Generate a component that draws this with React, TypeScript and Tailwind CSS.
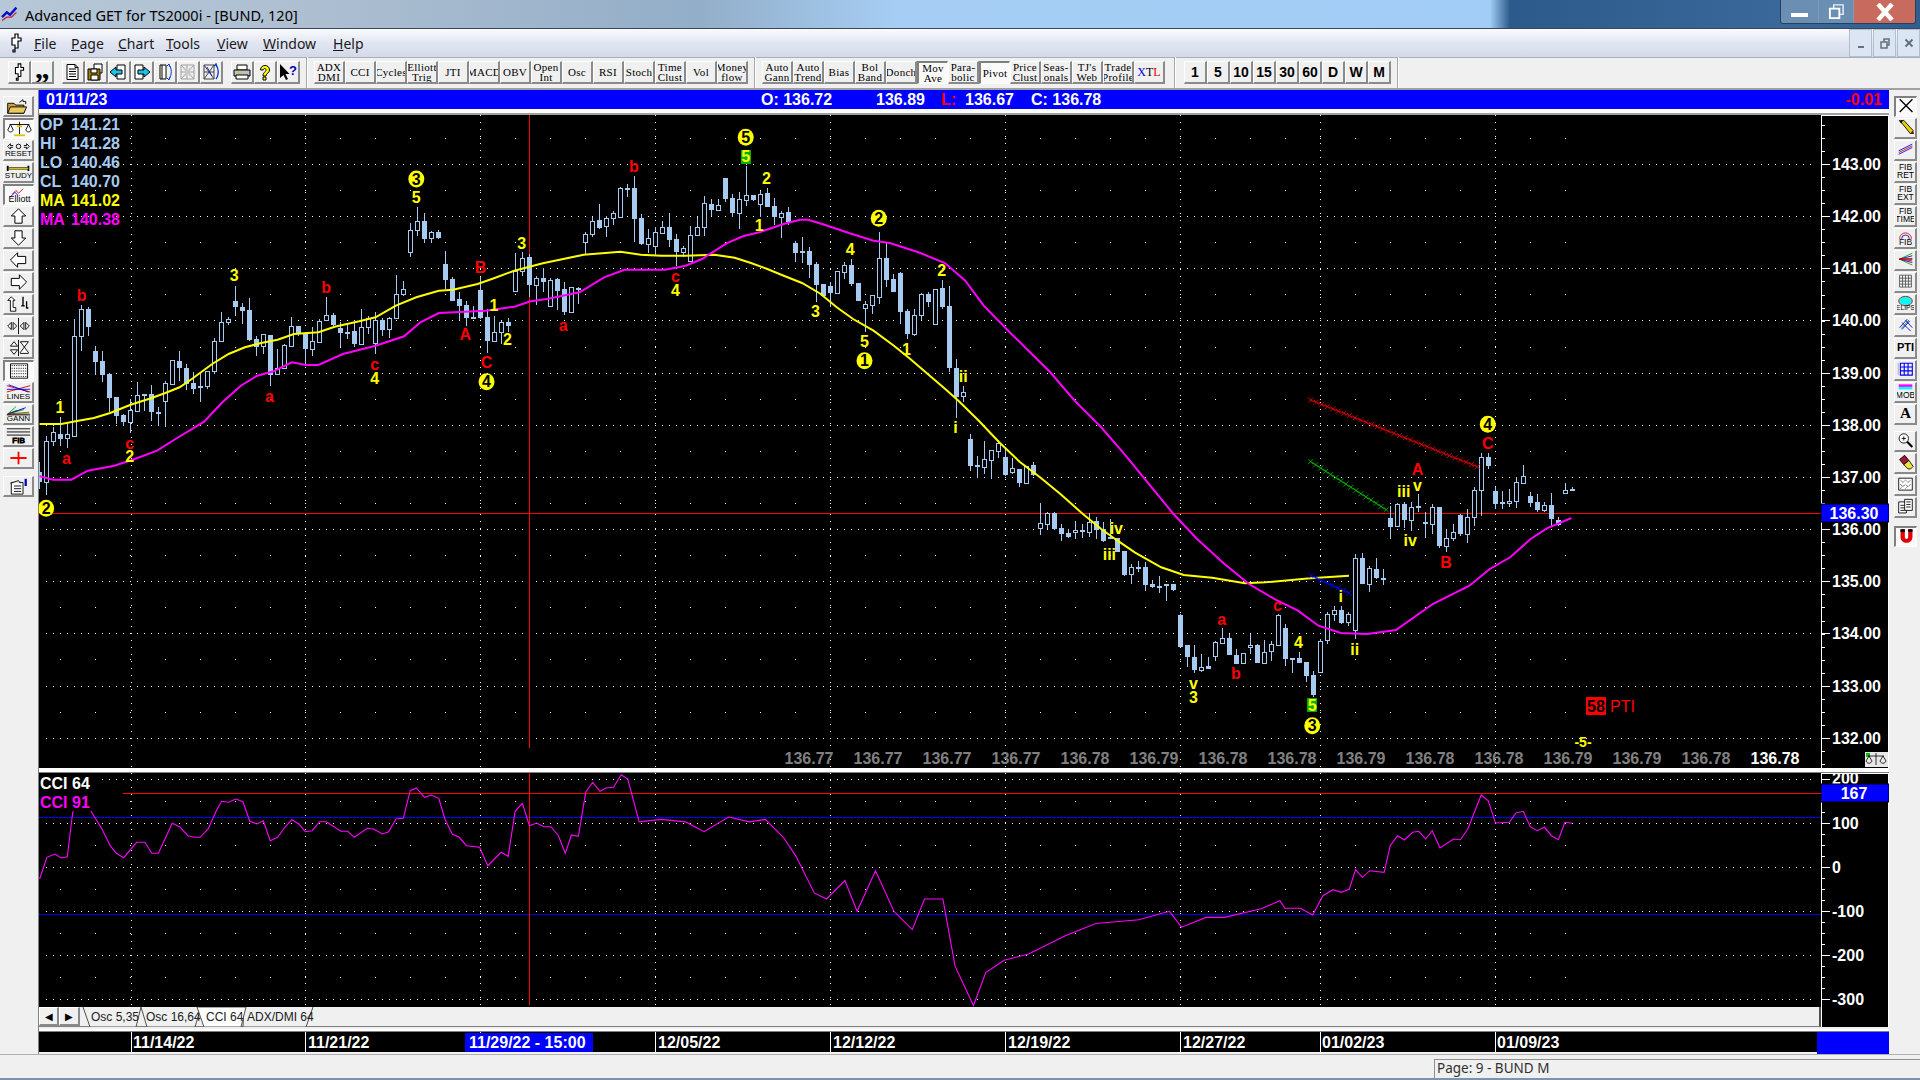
import type { ReactNode } from "react";
import clsx from "clsx";

type Pt = [number, number];
// [zoomX, hi, lo, top, bottom, solid]
type Bar = [number, number, number, number, number, number];

const CANDLE = "#a6caf0";

// chart data was read off crops, so each run keeps its own origin
const frame = (x0: number, y0: number, sx = 2.45, sy = 3) => ({ x0, y0, sx, sy });
const toPts = (f: ReturnType<typeof frame>, pts: number[][]): Pt[] =>
  pts.map(([x, y]) => [f.x0 + x / f.sx, f.y0 + y / f.sy]);

const F1 = frame(0, 0);
const F4 = frame(0, 240);
const F5 = frame(1280, 240);
const F6 = frame(640, 240);
const F7 = frame(0, 760);
const F8 = frame(1280, 700);
const F11 = frame(1000, 490);
const F12 = frame(400, 120);
const FULL = frame(0, 0, 1 / 1.2245, 1 / 1.2245);

const barRuns: { f: ReturnType<typeof frame>; bars: Bar[] }[] = [
  {
    f: F4,
    bars: [
      [97, 670, 750, 700, 728, 1], [114, 590, 768, 607, 728, 0], [131, 563, 622, 580, 607, 0], [148, 535, 620, 586, 600, 1],
      [165, 553, 627, 586, 598, 0], [183, 240, 590, 290, 590, 0], [200, 198, 335, 211, 290, 0], [217, 205, 290, 210, 263, 1],
      [234, 320, 408, 336, 368, 1], [251, 336, 430, 366, 407, 1], [268, 403, 520, 405, 476, 1], [286, 475, 555, 475, 530, 1],
      [303, 525, 560, 528, 548, 1], [320, 480, 583, 514, 548, 0], [337, 430, 520, 468, 515, 0], [354, 465, 515, 465, 470, 1],
      [371, 437, 545, 466, 520, 1], [388, 505, 560, 518, 520, 1], [405, 425, 563, 432, 485, 0], [422, 362, 435, 364, 434, 0],
      [439, 335, 425, 367, 388, 1], [456, 375, 452, 388, 435, 1], [473, 400, 465, 433, 449, 1], [490, 400, 490, 441, 446, 1],
      [507, 395, 450, 397, 442, 0], [525, 297, 405, 307, 395, 0], [542, 218, 310, 250, 307, 0], [559, 235, 257, 241, 250, 0],
      [576, 140, 230, 186, 203, 1], [593, 192, 255, 204, 215, 1], [611, 178, 305, 213, 302, 1], [628, 290, 352, 300, 323, 1],
      [645, 285, 345, 286, 320, 0], [662, 287, 440, 289, 407, 1], [679, 330, 407, 388, 406, 0], [697, 315, 390, 318, 388, 0],
      [714, 235, 320, 262, 320, 0], [731, 260, 290, 262, 285, 1], [748, 280, 378, 282, 330, 1], [765, 265, 350, 307, 330, 0],
      [782, 240, 310, 245, 308, 0], [800, 175, 240, 229, 242, 0], [817, 222, 260, 228, 258, 1], [834, 250, 325, 266, 282, 1],
      [851, 255, 300, 278, 282, 1], [868, 252, 325, 276, 316, 1], [886, 210, 315, 265, 314, 0], [903, 230, 285, 236, 265, 0],
      [920, 220, 345, 244, 313, 0], [937, 238, 290, 243, 272, 1], [954, 235, 298, 238, 271, 0], [971, 108, 240, 166, 238, 0],
      [988, 127, 170, 151, 166, 0],
    ],
  },
  {
    f: F12,
    bars: [
      [25, 312, 413, 332, 398, 0], [42, 265, 350, 307, 332, 0], [59, 282, 372, 307, 360, 1], [77, 335, 372, 340, 358, 0],
      [94, 332, 360, 340, 357, 1], [111, 397, 510, 435, 483, 1], [128, 475, 547, 481, 545, 1], [145, 520, 603, 541, 560, 1],
      [162, 545, 620, 558, 598, 1], [180, 560, 598, 595, 597, 1], [197, 475, 600, 513, 598, 1], [214, 570, 702, 595, 665, 1],
      [231, 590, 670, 640, 665, 0], [248, 605, 675, 610, 640, 0], [265, 598, 640, 610, 620, 1], [282, 403, 520, 455, 517, 0],
      [300, 400, 470, 418, 457, 0], [317, 405, 535, 415, 497, 1], [334, 470, 558, 478, 497, 0], [351, 447, 520, 478, 489, 1],
      [369, 478, 565, 483, 560, 0], [386, 478, 572, 480, 516, 1], [403, 490, 587, 510, 578, 1], [420, 505, 582, 505, 578, 0],
      [437, 505, 555, 508, 510, 1], [454, 340, 407, 346, 368, 0], [471, 293, 355, 307, 345, 0], [489, 255, 330, 304, 327, 1],
      [506, 290, 353, 297, 322, 0], [523, 275, 318, 281, 298, 0], [540, 205, 295, 208, 293, 0], [557, 195, 235, 207, 209, 1],
      [574, 172, 368, 207, 300, 1], [592, 285, 377, 297, 375, 1], [609, 330, 402, 358, 375, 0], [626, 325, 408, 340, 380, 0],
      [643, 305, 345, 325, 342, 0], [660, 282, 383, 323, 362, 1], [677, 346, 440, 361, 400, 1], [695, 380, 415, 388, 399, 0],
      [712, 322, 430, 347, 425, 0], [729, 295, 352, 325, 347, 0], [746, 232, 350, 253, 325, 0], [763, 240, 290, 256, 272, 1],
      [780, 240, 272, 259, 272, 0], [797, 177, 250, 177, 240, 1], [814, 225, 295, 237, 282, 1], [832, 220, 330, 240, 282, 0],
      [849, 140, 262, 229, 242, 0], [866, 228, 245, 229, 242, 1], [883, 215, 295, 226, 254, 0], [900, 208, 265, 222, 264, 1],
      [917, 238, 317, 262, 295, 1], [935, 277, 357, 281, 293, 0], [952, 265, 317, 279, 310, 1], [969, 365, 430, 372, 402, 1],
      [986, 355, 432, 396, 400, 1], [1003, 385, 477, 396, 437, 1], [1020, 430, 550, 435, 498, 1], [1037, 495, 530, 495, 530, 1],
      [1055, 490, 565, 502, 522, 1], [1072, 455, 525, 457, 522, 0], [1089, 430, 480, 439, 458, 0], [1106, 420, 502, 438, 495, 1],
      [1123, 492, 547, 492, 547, 1], [1140, 547, 638, 555, 566, 0], [1157, 528, 585, 529, 557, 0], [1175, 340, 555, 418, 533, 0],
      [1192, 370, 505, 417, 483, 1], [1209, 465, 520, 480, 519, 1], [1226, 460, 615, 463, 578, 1], [1243, 570, 660, 576, 645, 1],
      [1260, 570, 650, 587, 645, 0], [1277, 522, 603, 525, 587, 0], [1295, 520, 565, 526, 549, 1], [1312, 510, 616, 511, 614, 0],
      [1329, 484, 570, 507, 564, 1],
    ],
  },
  {
    f: F6,
    bars: [
      [758, 140, 400, 202, 387, 1], [775, 360, 537, 388, 475, 1], [792, 440, 490, 460, 470, 0], [810, 585, 695, 600, 681, 1],
      [827, 650, 717, 679, 683, 1], [844, 605, 705, 660, 683, 0], [861, 633, 720, 634, 662, 0], [878, 603, 657, 613, 635, 0],
      [895, 625, 710, 655, 708, 1], [912, 657, 705, 688, 700, 0], [930, 690, 745, 690, 733, 1], [947, 680, 733, 682, 731, 0],
      [964, 670, 710, 679, 707, 1],
    ],
  },
  {
    f: F11,
    bars: [
      [98, 42, 137, 103, 116, 0], [115, 68, 120, 72, 104, 0], [132, 70, 122, 72, 120, 1], [150, 105, 155, 118, 134, 1],
      [167, 120, 148, 132, 144, 1], [184, 97, 150, 124, 130, 0], [202, 105, 148, 124, 130, 1], [219, 72, 145, 98, 130, 0],
      [236, 85, 150, 96, 124, 1], [253, 100, 158, 120, 156, 1], [270, 90, 150, 145, 150, 1], [288, 148, 190, 148, 188, 1],
      [305, 185, 262, 187, 258, 1], [322, 225, 285, 235, 256, 0], [339, 217, 250, 235, 237, 1], [357, 220, 305, 234, 288, 1],
      [374, 272, 298, 285, 295, 1], [391, 262, 312, 291, 293, 1], [408, 285, 335, 286, 290, 1], [425, 284, 305, 286, 302, 1],
      [443, 374, 473, 378, 473, 1], [460, 468, 533, 468, 505, 1], [477, 468, 552, 505, 542, 1], [494, 495, 550, 533, 542, 0],
      [511, 505, 540, 532, 539, 1], [528, 455, 515, 460, 502, 0], [545, 418, 465, 448, 461, 0], [562, 435, 498, 448, 497, 1],
      [579, 480, 525, 497, 525, 1], [596, 492, 522, 493, 521, 0], [613, 435, 495, 468, 475, 0], [631, 465, 523, 468, 521, 1],
      [648, 453, 525, 488, 521, 0], [665, 455, 515, 466, 487, 0], [682, 376, 470, 379, 467, 0], [700, 405, 530, 418, 510, 1],
      [717, 510, 552, 508, 512, 1], [734, 490, 522, 507, 521, 1], [751, 520, 578, 520, 561, 1], [768, 547, 625, 558, 618, 1],
      [785, 450, 552, 455, 550, 0], [803, 368, 465, 376, 452, 0], [820, 352, 395, 362, 376, 0], [837, 350, 405, 364, 401, 1],
      [854, 370, 410, 376, 400, 0], [871, 195, 450, 208, 422, 0], [888, 193, 285, 207, 285, 1], [905, 232, 308, 238, 285, 0],
      [922, 207, 270, 240, 266, 1], [940, 240, 288, 266, 272, 1], [957, 52, 150, 88, 114, 1], [974, 42, 113, 46, 112, 0],
      [991, 38, 118, 45, 93, 1], [1008, 40, 125, 55, 92, 0], [1026, 15, 68, 52, 56, 1], [1043, 70, 148, 100, 104, 1],
      [1060, 45, 135, 55, 104, 0], [1077, 55, 178, 55, 170, 1], [1094, 120, 190, 146, 172, 0], [1111, 105, 155, 130, 146, 0],
      [1128, 75, 140, 78, 134, 1], [1145, 60, 162, 85, 134, 0],
    ],
  },
  {
    f: F5,
    bars: [
      [477, 745, 860, 752, 835, 0], [493, 643, 830, 655, 752, 0], [511, 643, 690, 655, 680, 1], [528, 745, 810, 757, 795, 1],
      [545, 757, 810, 790, 794, 1], [562, 750, 805, 785, 792, 0], [579, 715, 807, 730, 785, 0], [597, 678, 735, 710, 732, 0],
      [614, 760, 805, 772, 792, 1], [631, 765, 818, 790, 812, 1], [648, 790, 820, 797, 812, 0], [665, 762, 860, 797, 840, 1],
      [682, 835, 862, 842, 858, 1], [699, 733, 763, 752, 762, 0], [716, 745, 757, 750, 752, 1],
    ],
  },
];

const yellowMA: Pt[] = [
  ...toPts(F4, [[97, 555], [150, 555], [185, 547], [230, 537], [270, 522], [320, 497], [370, 478], [405, 462], [440, 445], [470, 420], [520, 375], [560, 345], [600, 325], [640, 312], [680, 302], [720, 285], [780, 280], [820, 263], [880, 247], [920, 235], [970, 200], [1020, 175], [1075, 155], [1110, 152], [1170, 135], [1210, 118], [1260, 95], [1330, 73], [1430, 47], [1520, 38]]),
  ...toPts(F12, [[590, 407], [640, 410], [700, 410], [770, 407], [820, 416], [860, 432], [900, 450], [940, 470], [985, 492], [1030, 524], [1070, 565], [1110, 600], [1160, 635], [1210, 680]]),
  ...toPts(F6, [[660, 358], [700, 400], [750, 452], [780, 485], [830, 545], [880, 610], [930, 668], [980, 715], [1030, 765], [1085, 825], [1130, 870]]),
  ...toPts(F11, [[288, 155], [330, 190], [395, 235], [450, 258], [520, 266], [600, 283], [650, 280], [760, 268], [855, 260]]),
];

const magentaMA: Pt[] = [
  ...toPts(F4, [[97, 712], [130, 722], [175, 722], [215, 695], [280, 680], [330, 660], [385, 635], [430, 600], [500, 548], [545, 490], [590, 440], [630, 410], [670, 397], [715, 370], [750, 378], [780, 378], [840, 345], [920, 320], [990, 292], [1030, 250], [1075, 222], [1190, 215], [1260, 203], [1300, 187], [1340, 180], [1420, 160], [1480, 115], [1530, 92]]),
  ...toPts(F12, [[560, 452], [650, 452], [700, 440], [740, 420], [800, 373], [840, 352], [880, 340], [940, 315], [980, 302], [1000, 302], [1040, 317], [1100, 342], [1160, 365], [1200, 372], [1270, 400], [1335, 432], [1385, 485], [1430, 560], [1490, 635]]),
  ...toPts(F6, [[960, 345], [1005, 400], [1065, 485], [1130, 565], [1190, 650], [1240, 725]]),
  ...toPts(F11, [[425, 75], [483, 150], [550, 225], [610, 285], [675, 332], [730, 365], [780, 410], [835, 432], [900, 435], [970, 423], [1060, 345], [1150, 290], [1200, 240], [1250, 205], [1300, 150], [1340, 118], [1400, 87]]),
];

const cciLine: Pt[] = [
  ...toPts(F7, [[97, 360], [115, 295], [135, 285], [150, 297], [165, 293], [178, 160], [200, 110], [232, 175], [250, 210], [270, 260], [285, 283], [303, 296], [335, 250], [355, 250], [372, 283], [388, 283], [422, 193], [440, 203], [460, 230], [475, 235], [490, 235], [510, 210], [530, 155], [543, 127], [560, 130], [578, 120], [595, 128], [612, 187], [630, 195], [645, 185], [662, 245], [680, 235], [698, 205], [715, 182], [732, 195], [748, 218], [765, 215], [783, 188], [800, 188], [835, 217], [852, 217], [868, 235], [900, 208], [915, 210], [937, 225], [952, 218], [970, 180], [988, 178], [1005, 95], [1020, 87], [1040, 115], [1057, 108], [1075, 118], [1090, 180], [1108, 225], [1125, 235], [1143, 260], [1175, 265], [1195, 320], [1228, 280], [1245, 292], [1262, 157], [1280, 133], [1297, 200], [1315, 192], [1332, 203], [1350, 203], [1368, 230], [1385, 283], [1400, 228], [1417, 232], [1435, 100], [1452, 70], [1470, 97], [1485, 87], [1503, 85], [1522, 47], [1538, 60], [1552, 125]]),
  ...toPts(FULL, [[522, 672], [540, 670], [560, 672], [575, 680], [595, 668], [612, 672], [625, 670], [640, 685], [650, 700], [665, 730], [675, 735], [690, 720], [700, 745], [715, 712], [730, 745], [745, 760], [755, 735], [770, 735], [780, 790], [795, 822], [805, 795], [820, 785], [840, 780], [870, 765], [895, 755], [930, 752], [955, 745], [965, 758], [985, 750], [1000, 750], [1030, 743]]),
  ...toPts(F8, [[0, 605], [12, 628], [50, 628], [80, 648], [105, 590], [130, 572], [150, 580], [170, 570], [185, 512], [202, 535], [220, 515], [255, 520], [270, 440], [288, 410], [305, 423], [325, 400], [340, 397], [357, 420], [373, 395], [392, 447], [425, 420], [442, 422], [460, 390], [493, 288], [510, 305], [528, 372], [562, 370], [578, 342], [596, 337], [613, 383], [630, 395], [648, 385], [665, 410], [682, 422], [698, 370], [716, 373]]),
];

const R = "#ff0000";
const Y = "#ffff00";
const waveLabels: { f: ReturnType<typeof frame>; items: [number, number, string, string][] }[] = [
  { f: F4, items: [[147, 505, "1", Y], [200, 170, "b", R], [163, 657, "a", R], [574, 110, "3", Y], [318, 612, "c", R], [318, 653, "2", Y], [799, 145, "b", R], [660, 472, "a", R], [918, 375, "c", R], [918, 418, "4", Y], [1177, 85, "B", R], [1140, 287, "A", R], [1210, 200, "1", Y], [1192, 370, "C", R], [1243, 300, "2", Y], [1380, 258, "a", R], [1278, 12, "3", Y]] },
  { f: F1, items: [[1020, 595, "5", Y]] },
  { f: F12, items: [[573, 143, "b", R], [847, 112, "5", Y], [898, 178, "2", Y], [880, 318, "1", Y], [675, 472, "c", R], [675, 515, "4", Y], [1103, 390, "4", Y], [1018, 577, "3", Y], [1138, 667, "5", Y], [1241, 690, "1", Y], [1327, 455, "2", Y]] },
  { f: F6, items: [[792, 412, "ii", Y], [773, 565, "i", Y]] },
  { f: F11, items: [[285, 117, "iv", Y], [268, 195, "iii", Y], [474, 582, "v", Y], [474, 625, "3", Y], [543, 390, "a", R], [578, 553, "b", R], [680, 350, "c", R], [731, 460, "4", Y], [765, 650, "5", Y], [835, 323, "i", Y], [869, 482, "ii", Y], [1005, 155, "iv", Y], [1093, 220, "B", R]] },
  { f: F5, items: [[337, 690, "A", R], [337, 740, "v", Y], [303, 757, "iii", Y], [509, 612, "C", R]] },
];

const circled: [ReturnType<typeof frame>, number, number, string][] = [
  [F4, 1192, 428, "4"], [F4, 113, 808, "2"], [F1, 1020, 540, "3"], [F12, 847, 55, "5"], [F12, 1173, 298, "2"],
  [F6, 550, 365, "1"], [F11, 765, 710, "3"], [F5, 509, 556, "4"],
];

const bottomQuotes = ["136.77", "136.77", "136.77", "136.77", "136.78", "136.79", "136.78", "136.78", "136.79", "136.78", "136.78", "136.79", "136.79", "136.78", "136.78"];
const gridX = [131, 305, 480, 655, 830, 1005, 1180, 1320, 1495];
const priceY = (p: number) => 165 + (143 - p) * 52.15;
const cciY = (v: number) => 867.5 - v * 0.44;
const snap = (x: number) => Math.round((x - 46.5) / 7) * 7 + 46.5;
const rnd = (n: number) => Math.round(n) + 0.5;
const poly = (pts: Pt[]) => pts.map(([x, y]) => `${x.toFixed(1)},${y.toFixed(1)}`).join(" ");
const range = (a: number, b: number, s: number) => {
  const out: number[] = [];
  for (let v = a; v <= b + 0.01; v += s) out.push(v);
  return out;
};

function Bevel({ pressed, className, children }: { pressed?: boolean; className?: string; children?: ReactNode }) {
  return (
    <div
      className={clsx(
        "flex shrink-0 items-center justify-center overflow-hidden text-black",
        pressed
          ? "border-t-2 border-l-2 border-r border-b border-t-[#808080] border-l-[#808080] border-r-white border-b-white bg-[#fafafa]"
          : "border-t border-l border-r-2 border-b-2 border-t-white border-l-white border-r-[#8a8a8a] border-b-[#8a8a8a] bg-[#f0f0f0]",
        className,
      )}>
      {children}
    </div>
  );
}

function TextBtn({ top, bottom, pressed }: { top: string; bottom?: string; pressed?: boolean }) {
  return (
    <Bevel pressed={pressed} className="h-[23px] w-[31px] flex-col font-['Liberation_Serif',serif] text-[11px] leading-[10px] tracking-[0.3px]">
      <span>{top}</span>
      {bottom && <span>{bottom}</span>}
    </Bevel>
  );
}

function Tree({ className }: { className?: string }) {
  return (
    <svg viewBox="0 0 12 20" className={className}>
      <path d="M4.5 1h3v4h3v3h-3v7h-3v4h-2v-2h2v-5h-3V5h3z" fill="#fff" stroke="#000" strokeWidth="1.2" />
    </svg>
  );
}

function Ico({ children, w = 20, h = 18 }: { children: ReactNode; w?: number; h?: number }) {
  return (
    <svg width={w} height={h} viewBox={`0 0 ${w} ${h}`} className="block">
      {children}
    </svg>
  );
}

const topIcons: ReactNode[] = [
  <path key="a" d="M4 1.5h8l3 3v12H4z M12 1.5v3h3 M6 6h7 M6 8.5h7 M6 11h7 M6 13.5h7" fill="#fff" stroke="#000" />,
  <g key="b">
    <path d="M8 1h8v9H8z" fill="#fff" stroke="#000" />
    <path d="M2 6h12v11H2z" fill="#a08000" stroke="#000" />
    <path d="M5 6h6v4H5z M5 12h7v5H5z" fill="#fff" stroke="#000" />
  </g>,
  <g key="c">
    <path d="M8 2h8v14H8z" fill="#fff" stroke="#000" />
    <path d="M1 9l6-5v3h6v4H7v3z" fill="#1cc4e8" stroke="#000" />
  </g>,
  <g key="d">
    <path d="M3 2h8v14H3z" fill="#fff" stroke="#000" />
    <path d="M18 9l-6-5v3H6v4h6v3z" fill="#1cc4e8" stroke="#000" />
  </g>,
  <g key="e">
    <path d="M5 2h6v14H5z M7 2v14" fill="#fff" stroke="#000" />
    <path d="M14 2c3 3 3 10 0 14 M12 3l2-2 1 3 M12 15l2 2 1-3" fill="none" stroke="#0030d0" />
  </g>,
  <g key="f" stroke="#a0a0a0" fill="none">
    <path d="M3 2h13v14H3z M3 2l13 14 M16 2L3 16 M9 2v14 M3 9h13" />
    <path d="M6 5l7 8 M13 5l-7 8" stroke="#c8c8c8" strokeWidth="2" />
  </g>,
  <g key="g" fill="none">
    <path d="M3 2h10v14H3z M3 2l10 14 M13 2L3 16 M3 9h10" stroke="#404040" />
    <path d="M15 2c3 3 3 10 0 14 M13 3l2-2 1 3" stroke="#0030d0" strokeWidth="1.3" />
    <path d="M6 4l5 9" stroke="#0030d0" />
  </g>,
];

const helpIcons: ReactNode[] = [
  <g key="p">
    <path d="M5 2h10v5H5z" fill="#fff" stroke="#000" />
    <path d="M2 7h16v6H2z" fill="#c0c0c0" stroke="#000" />
    <path d="M4 12h12v4H4z" fill="#fff" stroke="#000" />
    <path d="M6 10h3" stroke="#e0c000" strokeWidth="1.5" />
  </g>,
  <path key="q" d="M6 7c0-6 9-6 9 0 0 3-3.5 3-3.5 6h-3c0-4 3-4 3-6 0-2-2.5-2-2.8 0zM8.5 14h3v3h-3z" fill="#ffff00" stroke="#000" transform="translate(-0.5,0)" />,
  <g key="w">
    <path d="M2 1v14l3.5-3 2.5 5 2-1-2.5-5h4z" fill="#000" />
    <text x="11" y="12" fontSize="13" fontWeight="700" fill="#0000c0">?</text>
  </g>,
];

const Label = ({ y, children }: { y: number; children: string }) => (
  <text x="15" y={y} textAnchor="middle" fontSize="9" fontFamily="Liberation Sans" fill="#000">{children}</text>
);

const Arrow = ({ d }: { d: string }) => <path d={d} fill="#fff" stroke="#000" strokeWidth="1.1" />;

const leftTools: { n: ReactNode; pressed?: boolean; gap?: number }[] = [
  { n: <g><path d="M3 7h7l2 2h9v9H3z" fill="#c8a040" stroke="#000" /><path d="M3 18l3-7h18l-3 7z" fill="#e8c860" stroke="#000" /><path d="M16 6l4-3v2h3v3" fill="none" stroke="#000" /></g> },
  { pressed: true, n: <g fill="none" stroke="#000"><path d="M15 2v14 M4 5h22" /><path d="M2 11l3-6 3 6c-1 3-5 3-6 0zM22 11l3-6 3 6c-1 3-5 3-6 0z" fill="#fff" /><path d="M9 17h12" stroke="#e0c000" strokeWidth="2" /><path d="M12 7h6" stroke="#e0c000" strokeWidth="2" /></g> },
  { n: <g><path d="M3 6l3-3v2h3M3 6l3 3V7h3M27 6l-3-3v2h-3M27 6l-3 3V7h-3" fill="none" stroke="#000" /><circle cx="15" cy="6" r="2.5" fill="none" stroke="#000" /><Label y={17}>RESET</Label></g> },
  { n: <g><path d="M3 3v6M26 3v6" stroke="#000" strokeWidth="2" /><path d="M4 5h22v2H4z" fill="#e8d800" stroke="#000" strokeWidth="0.6" /><Label y={17}>STUDY</Label></g> },
  { pressed: true, n: <g><path d="M7 9l4-4 3 3 5-5" fill="none" stroke="#e00000" /><path d="M5 12l5-5 3 3" fill="none" stroke="#0000d0" /><text x="15" y="18" textAnchor="middle" fontSize="10" fontFamily="Liberation Sans">Elliott</text></g> },
  { n: <Arrow d="M15 2l8 8h-4v8h-8v-8H7z" /> },
  { n: <Arrow d="M11 2h8v8h4l-8 8-8-8h4z" /> },
  { n: <Arrow d="M6 10l8-8v4h9v8h-9v4z" /> },
  { n: <Arrow d="M24 10l-8-8v4H7v8h9v4z" /> },
  { n: <g><path d="M3 6l4-4 4 4H9v8h3v4H6V6z" fill="#fff" stroke="#000" /><path d="M20 2v10M24 7v8M18 12h4M24 15l2-1" stroke="#000" strokeWidth="1.5" fill="none" /></g> },
  { n: <g fill="#fff" stroke="#000"><path d="M15 1v18" /><path d="M3 10l4-4v8zM13 10l-4-4v8zM17 10l4-4v8zM27 10l-4-4v8z" /></g> },
  { n: <g fill="#fff" stroke="#000"><path d="M15 1v18" stroke="#000" /><path d="M6 8l4-5 4 5zM6 12l4 5 4-5z" /><path d="M17 3h9l-4.5 6 4.5 6v1h-9v-1l4.5-6-4.5-6z" /></g> },
  { pressed: true, n: <g><path d="M5 2h19v16H5z" fill="#fff" stroke="#000" /><path d="M5 4h19M5 7h19M5 10h19M5 13h19M5 16h19" stroke="#000" strokeDasharray="1 1" /></g> },
  { n: <g><path d="M2 3l26 7M2 10L28 3" stroke="#e00000" /><path d="M2 7h26M4 2l22 8" stroke="#0000e0" /><Label y={18}>LINES</Label></g> },
  { n: <g><path d="M3 10L12 2M3 10l10-4M3 10l18-5M3 10l24-2" stroke="#00a000" /><path d="M3 10l20-7" stroke="#0000e0" /><path d="M3 10h24" stroke="#e00000" /><path d="M2 11h26" stroke="#000" /><Label y={18}>GANN</Label></g> },
  { n: <g stroke="#000"><path d="M2 2h26M2 5.5h26M2 9h26" /><Label y={18}>FIB</Label></g> },
  { n: <path d="M15 3v14M6 10h18" stroke="#ff0000" strokeWidth="2" /> },
  { gap: 6, n: <g><path d="M7 6h13v13H7z" fill="#fff" stroke="#000" /><path d="M10 10h8M10 13h8M10 16h8" stroke="#000" /><path d="M6 7l9-3 2 3" fill="#e8e8e8" stroke="#000" /><path d="M23 2v8" stroke="#0000c0" strokeWidth="2.5" /></g> },
];

const Small = ({ a, b }: { a: string; b: string }) => (
  <g>
    <text x="10" y="8" textAnchor="middle" fontSize="10" fontFamily="Liberation Sans" fill="#000">{a}</text>
    <text x="10" y="17" textAnchor="middle" fontSize="10" fontFamily="Liberation Sans" fill="#000">{b}</text>
  </g>
);

const rightTools: { n: ReactNode; pressed?: boolean; gap?: number }[] = [
  { pressed: true, n: <path d="M2 1l15 15M17 1L2 16" stroke="#000" strokeWidth="1.6" /> },
  { n: <g><path d="M4 2l4-1 11 12-3 4z" fill="#e8d000" stroke="#000" /><path d="M2 1h5l-2 4z" fill="#000" /><path d="M16 17l3-4 1 4z" fill="#800000" /></g> },
  { n: <g><path d="M2 11l16-8M2 15L18 7" stroke="#0000e0" /><path d="M2 13L18 5" stroke="#e00000" /></g> },
  { n: <Small a="FIB" b="RET" /> },
  { n: <Small a="FIB" b="EXT" /> },
  { n: <Small a="FIB" b="TIME" /> },
  { n: <g><path d="M3 11a7 7 0 0114 0" fill="none" stroke="#e00000" /><path d="M5.5 11a4.500 4.500 0 019 0" fill="none" stroke="#0000d0" /><text x="10" y="18" textAnchor="middle" fontSize="10" fontFamily="Liberation Sans">FIB</text></g> },
  { n: <g fill="none"><path d="M3 9l15-7M3 9l15 7" stroke="#00a000" /><path d="M3 9l15-4M3 9l15 4" stroke="#0000d0" /><path d="M3 9h15" stroke="#000" /><path d="M3 9l15-1M3 9l15 2" stroke="#e00000" /></g> },
  { n: <g stroke="#555" fill="none"><path d="M3 2h14v14H3zM3 5.500h14M3 9h14M3 12.500h14M6.500 2v14M10 2v14M13.500 2v14" /></g> },
  { n: <g><ellipse cx="10" cy="6.500" rx="8" ry="5.500" fill="#00ffff" stroke="#e00000" /><text x="10" y="17.500" textAnchor="middle" fontSize="8" fontFamily="Liberation Sans">ELIPS</text></g> },
  { n: <g fill="none"><path d="M3 12L12 2M6 14L15 4" stroke="#0000d0" /><path d="M5 13L14 3" stroke="#008000" /><path d="M6 6l10 10M10 3l8 9" stroke="#0000d0" /></g> },
  { n: <text x="10" y="14" textAnchor="middle" fontSize="13" fontWeight="700" fontFamily="Liberation Sans">PTI</text> },
  { n: <g fill="none"><path d="M4 2h14v14H4zM4 6.500h14M4 11h14M8.500 2v14M13 2v14" stroke="#0000f0" strokeWidth="1.3" /><path d="M1.500 2v14" stroke="#a0a0c0" /></g> },
  { n: <g><path d="M2 1h16v3H2z" fill="#ff00ff" /><path d="M2 4h16v3H2z" fill="#00ffff" /><text x="10" y="17" textAnchor="middle" fontSize="10" fontFamily="Liberation Sans">MOB</text></g> },
  { n: <text x="10" y="15" textAnchor="middle" fontSize="18" fontWeight="700" fontFamily="Liberation Serif">A</text> },
  { gap: 5, n: <g fill="none" stroke="#000"><circle cx="8" cy="7" r="5.500" fill="#fff" /><path d="M5.500 7h5M8 4.500v5" /><path d="M12 11l6 6" strokeWidth="2.5" /></g> },
  { n: <g><path d="M3 6l6-5 5 6-6 5z" fill="#a01830" stroke="#000" /><path d="M8 12l6-5 5 7-3 3h-3z" fill="#f0e040" stroke="#000" /></g> },
  { n: <g><path d="M2 2h16v14H2z" fill="#fff" stroke="#000" /><path d="M4 4l3 3 3-3 3 3 3-3M4 9l3 3 3-3 3 3 3-3M4 14l3-3M10 14l3-3" stroke="#000" fill="none" strokeDasharray="1 1" /></g> },
  { n: <g stroke="#000" fill="#fff"><path d="M2 4h9v13H2z" /><path d="M9 1h9v13H9z" /><path d="M11 4h5M11 7h5M11 10h5M4 8h5M4 11h5M4 14h5" fill="none" /></g> },
  { gap: 7, pressed: true, n: <g><path d="M3 1h5v9c0 3 4 3 4 0V1h5v9c0 9-14 9-14 0z" fill="#e00000" /><path d="M3 1h5v3H3zM12 1h5v3h-5z" fill="#000" /></g> },
];

function ToolColumn({ tools, w, vw }: { tools: typeof leftTools; w: string; vw: number }) {
  return (
    <div className="flex flex-col gap-px">
      {tools.map((t, i) => (
        <div key={i} style={t.gap ? { marginTop: t.gap } : undefined}>
          <Bevel pressed={t.pressed} className={clsx("h-[21px]", w)}>
            <svg viewBox={`0 0 ${vw} 20`} width={vw - 3} height={18} className="block">{t.n}</svg>
          </Bevel>
        </div>
      ))}
    </div>
  );
}

function Dots({ color = "#fff" }: { color?: string }) {
  return null && color;
}

function Grid({ y1, y2, major, minor }: { y1: number; y2: number; major: number[]; minor: number[] }) {
  return (
    <g stroke="#fff" shapeRendering="crispEdges">
      {major.map((y) => <line key={y} x1="46" x2="1811" y1={rnd(y)} y2={rnd(y)} strokeDasharray="1 6" />)}
      {minor.map((y) => <line key={y} x1="60" x2="1567" y1={rnd(y)} y2={rnd(y)} strokeDasharray="1 34" />)}
      {gridX.map((x) => <line key={x} x1={x + 0.5} x2={x + 0.5} y1={y1} y2={y2} strokeDasharray="1 6" />)}
    </g>
  );
}

function Candles() {
  return (
    <g shapeRendering="crispEdges">
      {barRuns.flatMap(({ f, bars }, r) =>
        bars.map(([zx, hi, lo, top, bot, solid], i) => {
          const x = snap(f.x0 + zx / f.sx);
          const yy = (v: number) => Math.round(f.y0 + v / f.sy);
          const t = yy(top);
          const h = Math.max(yy(bot) - t, 2);
          return (
            <g key={`${r}-${i}`}>
              <line x1={x} x2={x} y1={yy(hi)} y2={yy(lo)} stroke={CANDLE} />
              {solid ? (
                <rect x={x - 2.5} y={t} width="5" height={h} fill={CANDLE} />
              ) : (
                <rect x={x - 2} y={t + 0.5} width="4" height={h} fill="#000" stroke={CANDLE} />
              )}
            </g>
          );
        }),
      )}
    </g>
  );
}

function XLine({ x1, y1, x2, y2, color, step = 6 }: { x1: number; y1: number; x2: number; y2: number; color: string; step?: number }) {
  const n = Math.round(Math.hypot(x2 - x1, y2 - y1) / step);
  return (
    <g stroke={color} strokeWidth="0.9">
      <line x1={x1} y1={y1} x2={x2} y2={y2} />
      {range(0, n, 1).map((i) => {
        const x = x1 + ((x2 - x1) * i) / n;
        const y = y1 + ((y2 - y1) * i) / n;
        return <path key={i} d={`M${x - 2.5} ${y - 2.5}l5 5m0-5l-5 5`} fill="none" />;
      })}
    </g>
  );
}

function PricePane() {
  const major = range(132, 143, 1).map(priceY);
  const minor = range(132.5, 143.5, 1).map(priceY);
  const ticks = range(126, 768, 13.04);
  const [rx1, ry1] = toPts(F5, [[75, 483]])[0];
  const [rx2, ry2] = toPts(F5, [[483, 683]])[0];
  const [gx1, gy1] = toPts(F5, [[75, 668]])[0];
  const [gx2, gy2] = toPts(F5, [[260, 812]])[0];
  const [bx1, by1] = toPts(F11, [[762, 260]])[0];
  const [bx2, by2] = toPts(F11, [[855, 312]])[0];
  const rows: [string, string, string][] = [
    ["OP", "141.21", CANDLE], ["HI", "141.28", CANDLE], ["LO", "140.46", CANDLE], ["CL", "140.70", CANDLE], ["MA", "141.02", Y], ["MA", "140.38", "#ff00ff"],
  ];
  return (
    <svg viewBox="39 116 1850 653" className="block h-[653px] w-[1850px] bg-black font-['Liberation_Sans',sans-serif] font-bold">
      <Grid y1={116} y2={769} major={major} minor={minor} />
      <line x1="39" x2="1821" y1="514.5" y2="514.5" stroke={R} shapeRendering="crispEdges" />
      <line x1="529.5" x2="529.5" y1="116" y2="749" stroke={R} shapeRendering="crispEdges" />
      <Candles />
      <polyline points={poly(yellowMA)} fill="none" stroke={Y} strokeWidth="2" />
      <polyline points={poly(magentaMA)} fill="none" stroke="#ff00ff" strokeWidth="2" />
      <XLine x1={rx1} y1={ry1} x2={rx2} y2={ry2} color="#e00000" />
      <XLine x1={gx1} y1={gy1} x2={gx2} y2={gy2} color="#00b000" />
      <XLine x1={bx1} y1={by1} x2={bx2} y2={by2} color="#0000ff" />

      {rows.map(([k, v, c], i) => (
        <g key={i} fill={c} fontSize="16">
          <text x="40" y={131 + i * 19}>{k}</text>
          <text x="71" y={131 + i * 19}>{v}</text>
        </g>
      ))}

      <rect x="741" y="151" width="10" height="14" fill="#00b000" />
      <rect x="1307" y="699" width="10" height="14" fill="#00b000" />
      {waveLabels.flatMap(({ f, items }, r) =>
        items.map(([zx, zy, t, c], i) => (
          <text key={`${r}-${i}`} x={f.x0 + zx / f.sx} y={f.y0 + zy / f.sy + 5.5} textAnchor="middle" fontSize="16" fill={c}>{t}</text>
        )),
      )}
      {circled.map(([f, zx, zy, t], i) => {
        const x = f.x0 + zx / f.sx;
        const y = f.y0 + zy / f.sy;
        return (
          <g key={i}>
            <ellipse cx={x} cy={y} rx="8" ry="8.500" fill={Y} />
            <text x={x} y={y + 5.5} textAnchor="middle" fontSize="16" fill="#000">{t}</text>
          </g>
        );
      })}

      <rect x="1586" y="698" width="20" height="18" fill={R} />
      <text x="1596" y="713" textAnchor="middle" fontSize="16" fill="#000">58</text>
      <text x="1610" y="713" fontSize="16" fontWeight="400" fill={R}>PTI</text>
      <text x="1583" y="748" textAnchor="middle" fontSize="14" fill={Y}>-5-</text>

      {bottomQuotes.map((q, i) => (
        <text key={i} x={809 + i * 69} y={765} textAnchor="middle" fontSize="16" fill={i === 14 ? "#fff" : "#808080"}>{q}</text>
      ))}

      <rect x="1821" y="116" width="68" height="653" fill="#000" />
      <path d="M1821.5 769V116.500H1888.500V769" fill="none" stroke="#fff" shapeRendering="crispEdges" />
      <g stroke="#fff" shapeRendering="crispEdges">
        {ticks.map((y) => <line key={y} x1="1822" x2="1825" y1={rnd(y)} y2={rnd(y)} />)}
        {major.map((y) => <line key={y} x1="1822" x2="1830" y1={rnd(y)} y2={rnd(y)} />)}
      </g>
      {range(132, 143, 1).map((p) => (
        <text key={p} x="1832" y={priceY(p) + 6} fontSize="16" fill="#fff">{p.toFixed(2)}</text>
      ))}
      <rect x="1821" y="505" width="68" height="18" fill="#0000ff" stroke="#000" />
      <text x="1854" y="520" textAnchor="middle" fontSize="16" fill="#fff">136.30</text>
      <g transform="translate(1865 753)">
        <rect width="23" height="15" fill="#e8e8e8" />
        <rect x="1" y="1" width="4" height="4" fill="#00c000" />
        <path d="M11 1v12M3 4h16M1 9l3-5 3 5c-1 3-5 3-6 0zM15 9l3-5 3 5c-1 3-5 3-6 0z" fill="none" stroke="#000" strokeWidth="0.8" />
      </g>
    </svg>
  );
}

function CciPane() {
  const majors = [200, 100, 0, -100, -200, -300].map(cciY);
  const minors = [150, 50, -50, -150, -250].map(cciY);
  return (
    <svg viewBox="39 774 1782 234" className="block h-[234px] w-[1782px] bg-black font-['Liberation_Sans',sans-serif] font-bold">
      <Grid y1={774} y2={1006} major={majors} minor={minors} />
      <line x1="123" x2="1821" y1="794.5" y2="794.5" stroke={R} strokeWidth="1.2" shapeRendering="crispEdges" />
      <line x1="39" x2="1821" y1="818.5" y2="818.5" stroke="#0000ff" strokeWidth="1.2" shapeRendering="crispEdges" />
      <line x1="39" x2="1821" y1="915.5" y2="915.5" stroke="#0000e0" shapeRendering="crispEdges" />
      <line x1="529.5" x2="529.5" y1="774" y2="1006" stroke={R} shapeRendering="crispEdges" />
      <polyline points={poly(cciLine)} fill="none" stroke="#ff00ff" strokeWidth="1.1" />
      <rect x="39" y="775" width="59" height="37" fill="#000" />
      <text x="40" y="790" fontSize="16" fill="#fff">CCI 64</text>
      <text x="40" y="809" fontSize="16" fill="#ff00ff">CCI  91</text>
    </svg>
  );
}

function CciAxis() {
  const ticks = range(779.5, 1006, 11);
  const values = [100, 0, -100, -200, -300];
  return (
    <svg viewBox="1821 774 68 254" className="block h-[254px] w-[68px] bg-black font-['Liberation_Sans',sans-serif] font-bold">
      <path d="M1821.5 1028V774.500H1888.500V1028H1821.500" fill="none" stroke="#fff" shapeRendering="crispEdges" />
      <g stroke="#fff" shapeRendering="crispEdges">
        {ticks.map((y) => <line key={y} x1="1822" x2="1825" y1={rnd(y)} y2={rnd(y)} />)}
        {[200, ...values].map((v) => <line key={v} x1="1822" x2="1830" y1={rnd(cciY(v))} y2={rnd(cciY(v))} />)}
      </g>
      <text x="1832" y="785" fontSize="16" fill="#fff">200</text>
      {values.map((v) => (
        <text key={v} x="1832" y={cciY(v) + 6} fontSize="16" fill="#fff">{v}</text>
      ))}
      <rect x="1821" y="785" width="68" height="18" fill="#0000ff" stroke="#000" />
      <text x="1854" y="800" textAnchor="middle" fontSize="16" fill="#fff">167</text>
    </svg>
  );
}

function TabRow() {
  const tabs: [string, number, string, boolean][] = [
    ["M82 1008l7 20h46l5-20", 90, "Osc 5,35", false],
    ["M140 1008l6 20h48l6-20", 145, "Osc 16,64", false],
    ["M243 1008l-1 20h63l7-20", 246, "ADX/DMI 64", false],
    ["M196 1008l7 20h37l5-20z", 205, "CCI 64", true],
  ];
  return (
    <div className="flex h-[20px] w-[1782px] items-start border-r-2 border-b border-r-[#505050] border-b-[#808080] bg-[#f0f0f0]">
      <Bevel className="h-[19px] w-[20px] text-[10px]">◀</Bevel>
      <Bevel className="h-[19px] w-[21px] text-[10px]">▶</Bevel>
      <svg viewBox="80 1008 240 20" className="ml-px block h-[20px] w-[240px] font-['Liberation_Sans',sans-serif]">
        {tabs.map(([d, x, t, active]) => (
          <g key={t}>
            <path d={d} fill={active ? "#fff" : "#f0f0f0"} stroke="#505050" />
            <text x={x} y="1022" fontSize="12" fill="#202020">{t}</text>
          </g>
        ))}
      </svg>
    </div>
  );
}

function DateBar() {
  const dates: [number, string][] = [[133, "11/14/22"], [308, "11/21/22"], [658, "12/05/22"], [833, "12/12/22"], [1008, "12/19/22"], [1183, "12/27/22"], [1322, "01/02/23"], [1497, "01/09/23"]];
  return (
    <div className="flex h-[22px] w-[1850px]">
      <svg viewBox="39 1034 1778 22" className="block h-[22px] w-[1778px] bg-black font-['Liberation_Sans',sans-serif] font-bold">
        <rect x="39" y="1054" width="1778" height="2" fill="#f0f0f0" />
        {gridX.map((x) => <line key={x} x1={x + 0.5} x2={x + 0.5} y1="1034" y2="1054" stroke="#fff" shapeRendering="crispEdges" />)}
        {dates.map(([x, t]) => <text key={t} x={x} y="1050" fontSize="16" fill="#fff">{t}</text>)}
        <rect x="465" y="1035" width="128" height="19" fill="#0000ff" />
        <text x="469" y="1050" fontSize="16" fill="#fff">11/29/22 - 15:00</text>
      </svg>
      <div className="h-[22px] w-[72px] bg-[#0000ff]" />
    </div>
  );
}

const row1 = [["ADX", "DMI"], ["CCI"], ["Cycles"], ["Elliott", "Trig"], ["JTI"], ["MACD"], ["OBV"], ["Open", "Int"], ["Osc"], ["RSI"], ["Stoch"], ["Time", "Clust"], ["Vol"], ["Money", "flow"]];
const row2: [string, string?, boolean?][] = [["Auto", "Gann"], ["Auto", "Trend"], ["Bias"], ["Bol", "Band"], ["Donch"], ["Mov", "Ave", true], ["Para-", "bolic"], ["Pivot", undefined, true], ["Price", "Clust"], ["Seas-", "onals"], ["TJ's", "Web"], ["Trade", "Profile"]];
const intervals = ["1", "5", "10", "15", "30", "60", "D", "W", "M"];
const menus: [string, string, string][] = [["F", "ile", "w-[37px]"], ["P", "age", "w-[47px]"], ["C", "hart", "w-[48px]"], ["T", "ools", "w-[51px]"], ["V", "iew", "w-[46px]"], ["W", "indow", "w-[70px]"], ["H", "elp", "w-[40px]"]];

function Sep({ className }: { className?: string }) {
  return <div className={clsx("h-[31px] w-[2px] shrink-0 border-l border-[#a8a8a8] bg-white", className)} />;
}

export default function App() {
  return (
    <div className="flex h-[1080px] w-[1920px] flex-col overflow-hidden bg-[#f0f0f0] font-['Liberation_Sans',sans-serif]">
      {/* window title */}
      <div className="flex h-[29px] shrink-0 items-start border-b border-[#39465a] bg-[linear-gradient(90deg,#b6c7d8_0px,#aebfd1_300px,#93aec8_700px,#a6cef4_900px,#a2cdf6_1490px,#2c5a8a_1510px,#3a689a_1780px,#2f5f90_1920px)]">
        <svg viewBox="0 0 20 20" className="mt-[6px] h-[16px] w-[20px] shrink-0">
          <path d="M0 14l6-6 4 3 8-9" fill="none" stroke="#1010c0" strokeWidth="3" />
          <path d="M0 18l6-4 6 0 6-6" fill="none" stroke="#c02030" strokeWidth="1.5" />
        </svg>
        <span className="ml-[5px] mt-[5px] font-['Noto_Sans',sans-serif] text-[14.500px] leading-[20px] text-black">Advanced GET for TS2000i - [BUND, 120]</span>
        <div className="ml-auto mr-[4px] flex h-[24px] w-[136px] overflow-hidden rounded-b-[3px] border border-t-0 border-[#2a3f58]">
          <div className="flex w-[38px] items-end justify-center border-r border-[#7f9ab5] bg-[#6b8fb3] pb-[6px]">
            <div className="h-[4px] w-[17px] bg-white" />
          </div>
          <div className="flex w-[35px] items-center justify-center border-r border-[#7f9ab5] bg-[#6b8fb3]">
            <svg viewBox="0 0 18 18" className="h-[17px] w-[17px]"><path d="M6 2h10v10H6z" fill="none" stroke="#e8f0f8" strokeWidth="1.500" /><path d="M2 6h10v10H2z" fill="#6b8fb3" stroke="#fff" strokeWidth="2" /></svg>
          </div>
          <div className="flex flex-1 items-center justify-center bg-[#c96a5e]">
            <svg viewBox="0 0 20 18" className="h-[18px] w-[20px]"><path d="M3 1l14 16M17 1L3 17" stroke="#fff" strokeWidth="4.500" /></svg>
          </div>
        </div>
      </div>

      {/* menu */}
      <div className="flex h-[29px] shrink-0 items-center border-b border-[#a9b0bd] bg-gradient-to-b from-[#fafbfd] via-[#e2e6f2] to-[#d3d9e9]">
        <Tree className="ml-[10px] h-[20px] w-[13px]" />
        <div className="ml-[11px] flex font-['Noto_Sans',sans-serif] text-[14px] text-[#1a1a1a]">
          {menus.map(([u, rest, w]) => (
            <span key={u} className={w}><span className="underline">{u}</span>{rest}</span>
          ))}
        </div>
        <div className="ml-auto flex h-[28px] items-stretch gap-px">
          {["_", "restore", "x"].map((g) => (
            <div key={g} className="flex w-[23px] items-center justify-center border border-[#aebfd6] bg-[#dce6f2] text-[#506070]">
              <svg viewBox="0 0 12 12" className="h-[12px] w-[12px]" fill="none" stroke="#607080" strokeWidth="1.500">
                {g === "_" && <path d="M3 10h6" strokeWidth="2" />}
                {g === "restore" && <path d="M2 5h6v6H2zM5 5V2h5v6H8" />}
                {g === "x" && <path d="M2.500 2.500l7 7M9.500 2.500l-7 7" strokeWidth="2" />}
              </svg>
            </div>
          ))}
        </div>
      </div>

      {/* toolbar */}
      <div className="flex h-[32px] shrink-0 items-center border-b-2 border-[#a0a0a0] bg-[#f0f0f0] pb-px">
        <Bevel className="ml-[8px] h-[23px] w-[23px]"><Tree className="h-[18px] w-[11px]" /></Bevel>
        <Bevel className="h-[23px] w-[23px] font-['Liberation_Serif',serif] text-[30px] leading-[36px] font-bold"><span className="mt-[8px] block h-[22px]">”</span></Bevel>
        <div className="ml-[8px] flex">
          {topIcons.map((n, i) => (
            <Bevel key={i} className="h-[23px] w-[23px]"><Ico>{n}</Ico></Bevel>
          ))}
        </div>
        <div className="ml-[8px] flex">
          {helpIcons.map((n, i) => (
            <Bevel key={i} className="h-[23px] w-[23px]"><Ico>{n}</Ico></Bevel>
          ))}
        </div>
        <Sep className="ml-[6px]" />
        <div className="ml-[6px] flex">
          {row1.map(([a, b]) => <TextBtn key={a} top={a} bottom={b} />)}
        </div>
        <Sep className="ml-[6px]" />
        <div className="ml-[6px] flex">
          {row2.map(([a, b, p]) => <TextBtn key={a + b} top={a} bottom={b} pressed={p} />)}
          <Bevel className="h-[23px] w-[31px] font-['Liberation_Serif',serif] text-[12px]">
            <span className="text-[#0000e0]">X</span><span>T</span><span className="text-[#e00000]">L</span>
          </Bevel>
        </div>
        <Sep className="ml-[9px]" />
        <div className="ml-[8px] flex">
          {intervals.map((n) => (
            <Bevel key={n} className="h-[23px] w-[23px] text-[14px] font-bold">{n}</Bevel>
          ))}
        </div>
        <Sep className="ml-[6px]" />
      </div>

      <div className="flex min-h-0 flex-1">
        {/* left tools */}
        <div className="w-[38px] shrink-0 pt-[6px] pl-[3px]">
          <ToolColumn tools={leftTools} w="w-[31px]" vw={30} />
        </div>

        {/* charts */}
        <div className="flex w-[1851px] shrink-0 flex-col border-l border-[#808080] bg-[#f0f0f0]">
          <div className="flex h-[19px] items-center bg-[#0000ff] text-[16px] leading-none font-bold whitespace-pre text-white">
            <span className="ml-[7px] w-[715px]">01/11/23</span>
            <span className="w-[115px]">O: 136.72</span>
            <span className="w-[65px]">136.89</span>
            <span className="w-[24px] text-[#ff0000]">L:</span>
            <span className="w-[66px]">136.67</span>
            <span>C: 136.78</span>
            <span className="ml-auto mr-[7px] text-[#ff0000]">-0.01</span>
          </div>
          <div className="h-[4px] bg-white" />
          <div className="h-[2px] bg-[#a0a0a0]" />
          <PricePane />
          <div className="h-[4px] bg-white" />
          <div className="h-px bg-[#808080]" />
          <div className="flex">
            <div className="flex flex-col">
              <CciPane />
              <TabRow />
            </div>
            <CciAxis />
          </div>
          <div className="h-[2px] bg-[#f0f0f0]" />
          <div className="h-[2px] bg-white" />
          <div className="h-px bg-[#808080]" />
          <DateBar />
        </div>

        {/* right tools */}
        <div className="flex-1 pt-[6px] pl-[5px]">
          <ToolColumn tools={rightTools} w="w-[23px]" vw={20} />
        </div>
      </div>

      {/* status */}
      <div className="flex h-[24px] shrink-0 items-end border-t border-[#b0b0b0] bg-[#f0f0f0]">
        <div className="ml-[1434px] flex h-[19px] flex-1 items-center border-t border-l border-[#909090] pl-[2px] font-['Noto_Sans',sans-serif] text-[13.500px] leading-none text-[#303030]">
          Page: 9 - BUND M
        </div>
      </div>
      <div className="h-[2px] shrink-0 bg-[#7b93ad]" />
    </div>
  );
}
